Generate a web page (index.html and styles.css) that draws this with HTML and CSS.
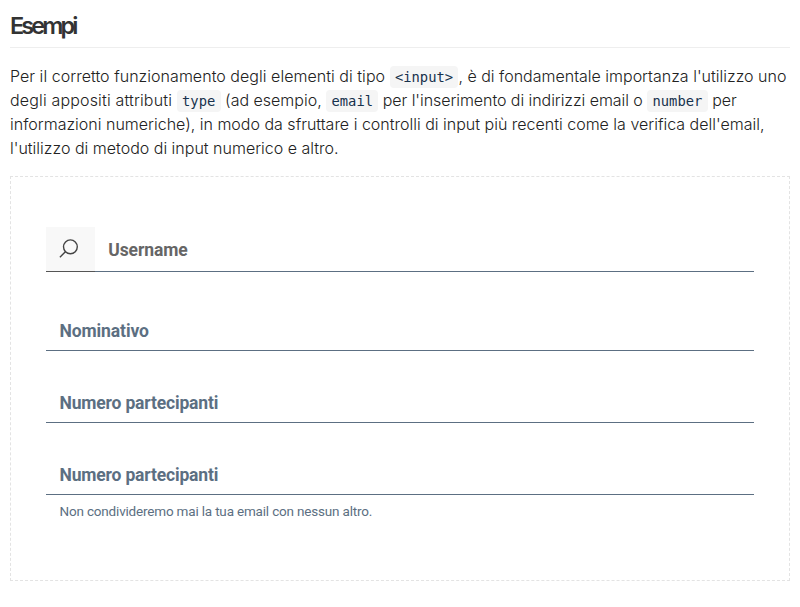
FILE: index.html
```html
<!DOCTYPE html>
<html lang="it">
<head>
<meta charset="utf-8">
<title>Esempi</title>
<link rel="stylesheet" href="styles.css">
</head>
<body>
<h2><span>Esempi</span></h2>
<p class="intro"><span class="l1">Per il corretto funzionamento degli elementi di tipo </span><code>&lt;input&gt;</code>, è di fondamentale importanza l'utilizzo uno<br><span class="l2">degli appositi attributi </span><code>type</code> (ad esempio, <code>email</code><span class="l2b"> per l'inserimento di indirizzi email o </span><code>number</code> per<br>informazioni numeriche), in modo da sfruttare i controlli di input più recenti come la verifica dell'email,<br>l'utilizzo di metodo di input numerico e altro.</p>
<div class="example">
  <div class="field group">
    <div class="prepend"><svg width="24" height="24" viewBox="0 0 24 24"><circle cx="13.4" cy="9.8" r="6.9"/><path d="M8.6 14.6 2.9 20.2"/></svg></div>
    <div class="control"><label>Username</label></div>
  </div>
  <div class="field"><label>Nominativo</label></div>
  <div class="field number"><label>Numero partecipanti</label></div>
  <div class="field number"><label>Numero partecipanti</label></div>
  <small><span>Non condivideremo mai la tua email con nessun altro.</span></small>
</div>
</body>
</html>
```
FILE: styles.css
```css
* { box-sizing: border-box; }
body { margin: 0; padding: 0 10px; background: #fff; color: #333; font-family: Inter, sans-serif; font-size: 16px; }
h2 { margin: 0 0 16px; height: 48px; padding-top: 10px; border-bottom: 1px solid #eee; font-size: 23.5px; line-height: 32px; font-weight: 600; letter-spacing: -2.9px; color: #333; }
.intro { margin: 0 0 16px; height: 96px; line-height: 24px; font-weight: 300; white-space: nowrap; color: #222; }
.l1 { letter-spacing: .035px; }
.l2 { letter-spacing: .16px; }
.l2b { letter-spacing: -.06px; }
code { font: 13.8px/16px "DejaVu Sans Mono", monospace; letter-spacing: 0; color: #17324d; background: #f5f5f5; border-radius: 4px; padding: 3px 5.3px; }
.example { height: 405px; padding: 50px 35px 0; border: 1px dashed #e3e3e3; }
.field { height: 40px; margin-bottom: 32px; padding-left: 13.5px; border-bottom: 1px solid #5c6f82; display: flex; color: #5c6f82; font: 700 17.5px/41px Roboto, sans-serif; letter-spacing: -.1px; white-space: nowrap; }
.number { letter-spacing: -.17px; }
.group { height: 45px; margin-bottom: 39px; padding: 0; border: 0; }
.prepend { width: 49px; padding: 10px 0 0 11px; background: #f8f8f8; border-bottom: 1px solid #555; }
.prepend svg { display: block; fill: none; stroke: #444; stroke-width: 1.4; }
.control { flex: 1; padding-left: 13.3px; border-bottom: 1px solid #5c6f82; line-height: 47px; color: #666; }
small { display: block; margin-top: -25px; padding-left: 13.5px; color: #5c6f82; font: 13.5px/18px Roboto, sans-serif; letter-spacing: -.18px; white-space: nowrap; }
```
